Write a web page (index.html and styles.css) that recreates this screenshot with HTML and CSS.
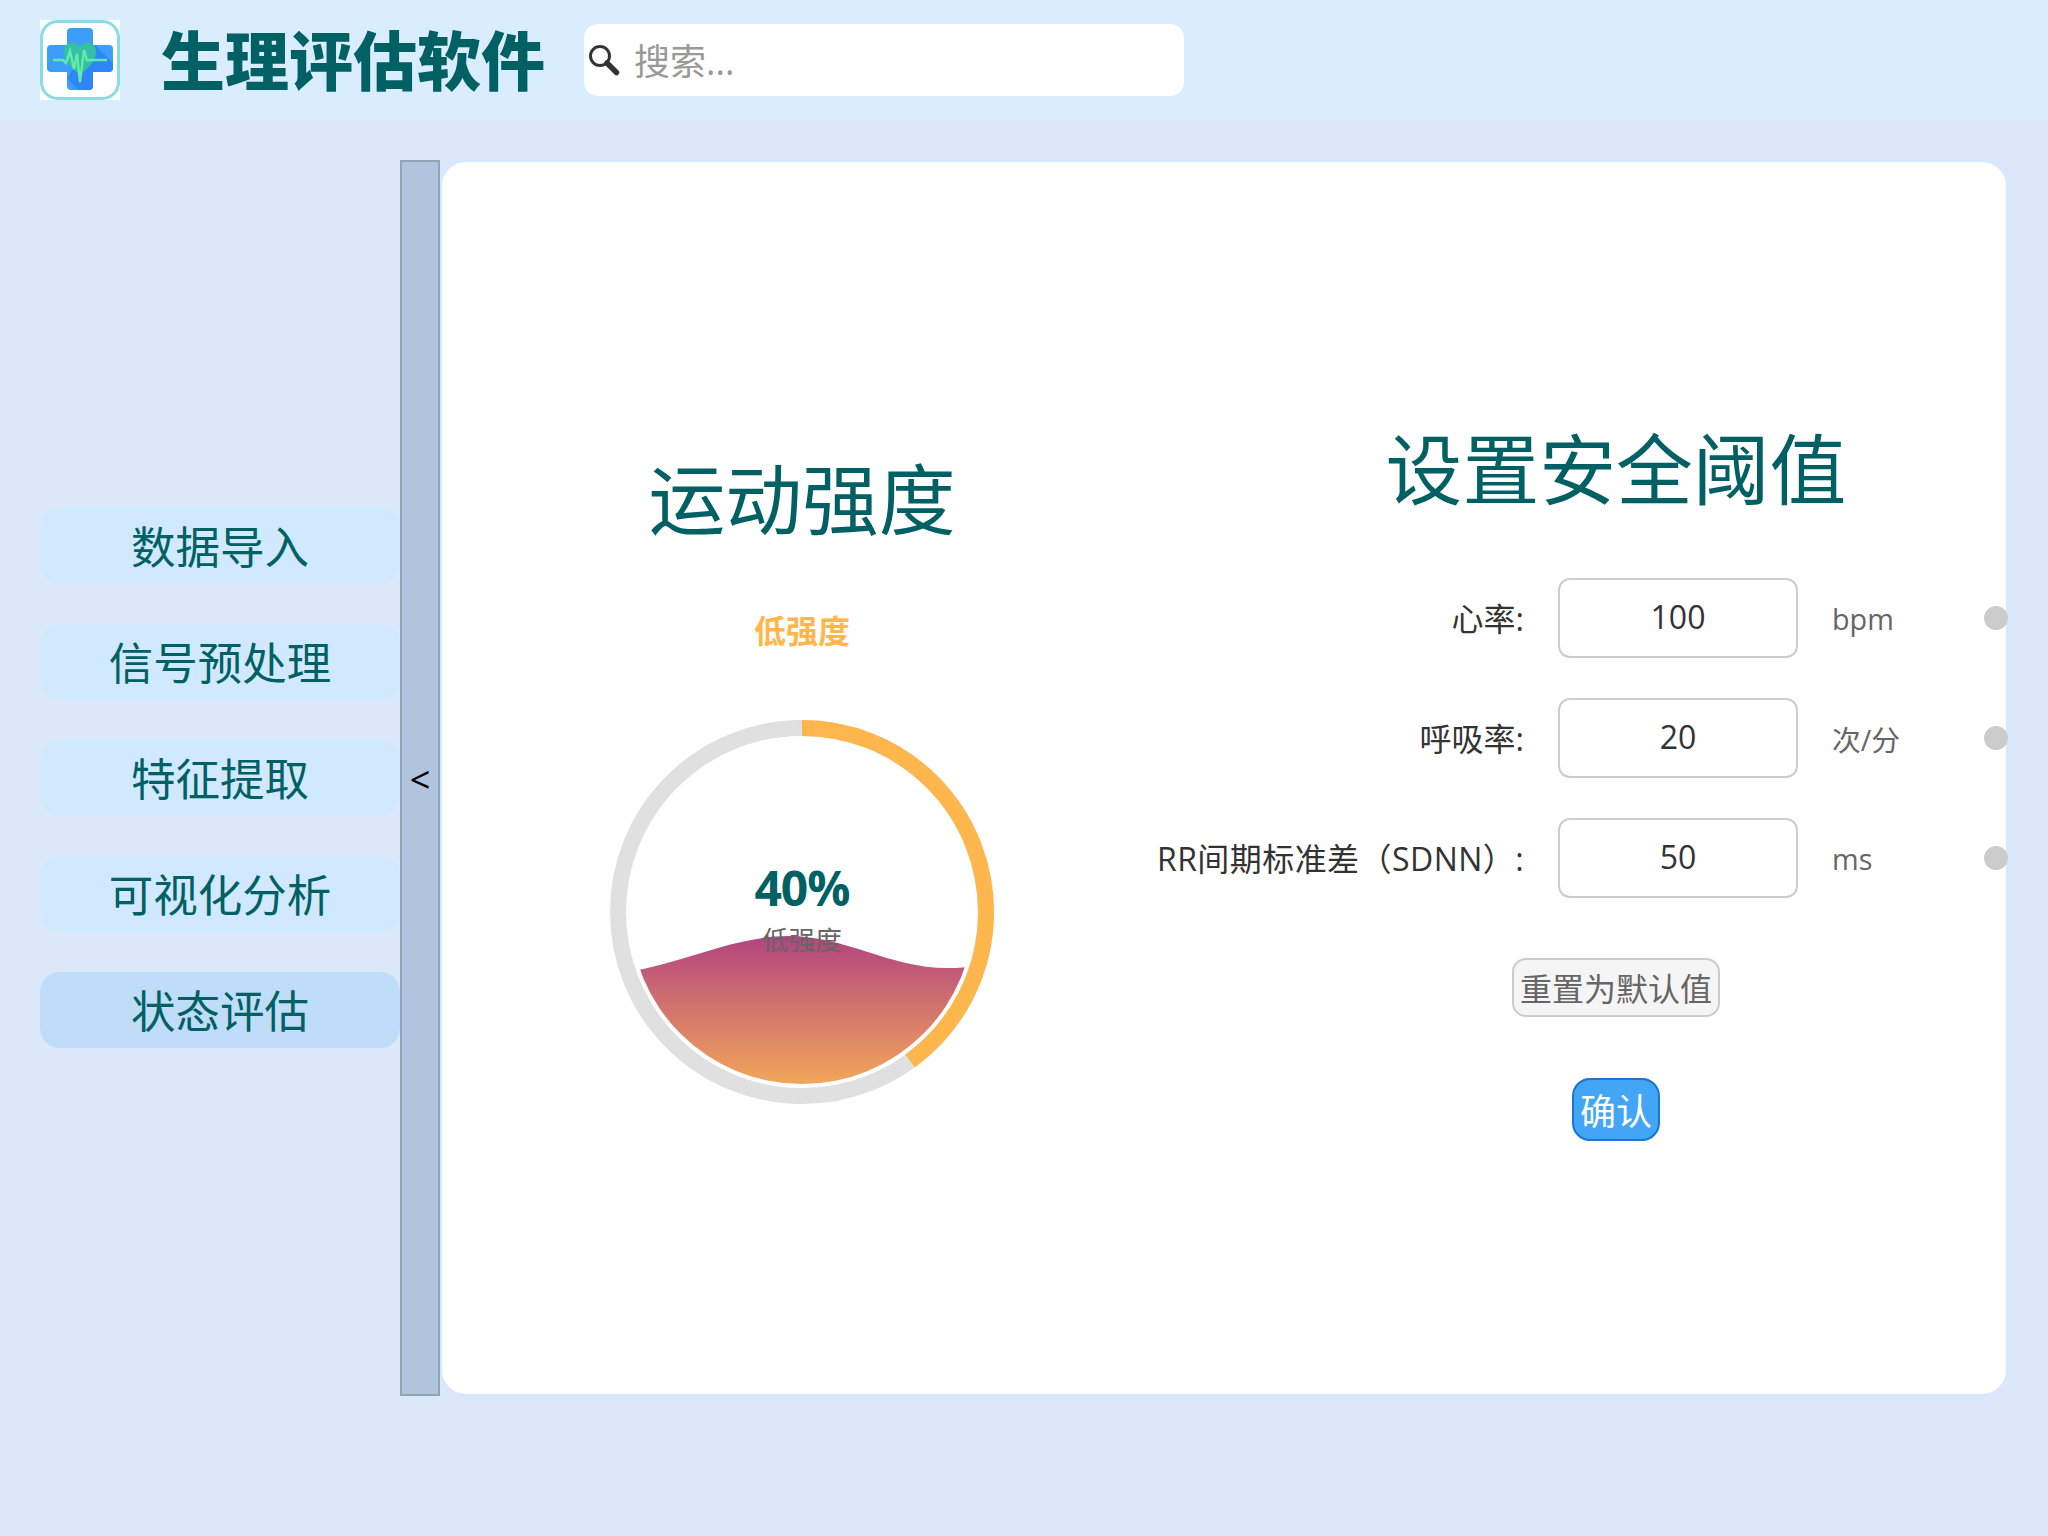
FILE: index.html
```html
<!DOCTYPE html>
<html lang="zh-CN">
<head>
<meta charset="utf-8">
<title>生理评估软件</title>
<link rel="stylesheet" href="styles.css">
</head>
<body>
<header class="topbar">
  <svg class="logo" viewBox="0 0 80 80" aria-label="logo">
    <defs>
      <clipPath id="crossClip"><path d="M31 8h18a4 4 0 0 1 4 4v13h16a4 4 0 0 1 4 4v19a4 4 0 0 1-4 4H53v14a4 4 0 0 1-4 4H31a4 4 0 0 1-4-4V52H11a4 4 0 0 1-4-4V29a4 4 0 0 1 4-4h16V12a4 4 0 0 1 4-4z"/></clipPath>
    </defs>
    <rect width="80" height="80" fill="#fff"/>
    <rect x="1.500" y="1.500" width="77" height="77" rx="16" fill="#fff" stroke="#88dbe9" stroke-width="3"/>
    <g clip-path="url(#crossClip)">
      <rect width="80" height="80" fill="#3d9efa"/>
      <path d="M52 22L80 50V80H48L27 58z" fill="#2f86f6"/>
    </g>
    <path d="M40 55C32 48 24 41 24 32c0-6 4-9.500 8.500-9.500 3 0 6 1.500 7.500 4 1.500-2.500 4.500-4 7.500-4 4.500 0 8.500 3.500 8.500 9.500 0 9-8 16-16 23z" fill="#35c0a5"/>
    <path d="M13 40H23L26 43 30 31 34 49 37 34 40 62 44 30 47 40H67" fill="none" stroke="#62eaa9" stroke-width="2.400"/>
  </svg>
  <h1 class="app-title">生理评估软件</h1>
  <label class="search">
    <svg class="search-icon" viewBox="0 0 32 32" aria-hidden="true">
      <circle cx="12" cy="12" r="9.500" fill="#fff" stroke="#333" stroke-width="3"/>
      <path d="M19 19L28.500 28.500" stroke="#333" stroke-width="5.500" stroke-linecap="round"/>
    </svg>
    <input class="search-input" type="text" placeholder="搜索...">
  </label>
</header>

<div class="workspace">
  <nav class="sidebar">
    <button class="nav-item">数据导入</button>
    <button class="nav-item">信号预处理</button>
    <button class="nav-item">特征提取</button>
    <button class="nav-item">可视化分析</button>
    <button class="nav-item is-active">状态评估</button>
  </nav>
  <button class="collapse">&lt;</button>
  <main class="panel">
    <section class="intensity">
      <h2 class="section-title intensity-title">运动强度</h2>
      <div class="status">低强度</div>
      <div class="gauge">
        <svg class="gauge-svg" viewBox="0 0 384 384" aria-hidden="true">
          <defs>
            <linearGradient id="waveFill" gradientUnits="userSpaceOnUse" x1="0" y1="216" x2="0" y2="364">
              <stop offset="0" stop-color="#b2447f"/>
              <stop offset="1" stop-color="#f2a65a"/>
            </linearGradient>
            <clipPath id="innerClip"><circle cx="192" cy="192" r="172"/></clipPath>
          </defs>
          <circle cx="192" cy="192" r="184" fill="none" stroke="#e0e0e0" stroke-width="16"/>
          <circle class="gauge-arc" cx="192" cy="192" r="184" fill="none" stroke="#ffb74d" stroke-width="16" stroke-dasharray="462.400 1156.100"/>
          <path clip-path="url(#innerClip)" d="M0 254C60 250 118 216 178 216C238 216 280 249 340 248C360 247.500 384 244 384 240V384H0Z" fill="url(#waveFill)"/>
        </svg>
        <div class="gauge-text">
          <div class="gauge-value">40%</div>
          <div class="gauge-label">低强度</div>
        </div>
      </div>
    </section>

    <section class="thresholds">
      <h2 class="section-title shifted">设置安全阈值</h2>
      <div class="rows">
        <label class="row-label">心率:</label>
        <input class="row-input" type="text" value="100">
        <span class="row-unit">bpm</span>
        <span class="row-dot"></span>
        <label class="row-label">呼吸率:</label>
        <input class="row-input" type="text" value="20">
        <span class="row-unit">次/分</span>
        <span class="row-dot"></span>
        <label class="row-label row-label-long">RR间期标准差（SDNN）:</label>
        <input class="row-input" type="text" value="50">
        <span class="row-unit">ms</span>
        <span class="row-dot"></span>
      </div>
      <button class="btn-reset shifted">重置为默认值</button>
      <button class="btn-confirm shifted">确认</button>
    </section>
  </main>
</div>
</body>
</html>
```
FILE: styles.css
```css
* { box-sizing: border-box; }

html, body { height: 100%; }

body {
  margin: 0;
  min-height: 1536px;
  overflow: hidden;
  background: #dae8fa;
  font-family: "Open Sans", "Noto Sans CJK SC", sans-serif;
  color: #333;
}

button, input { font-family: inherit; }

.topbar {
  display: flex;
  align-items: center;
  height: 120px;
  padding-left: 40px;
  background: #d9edff;
}

.logo { width: 80px; height: 80px; flex: none; }

.app-title {
  margin: 2px 39px 0 41px;
  font-size: 64px;
  font-weight: 900;
  line-height: 80px;
  color: #006064;
  white-space: nowrap;
}

.search {
  display: flex;
  align-items: center;
  width: 600px;
  height: 72px;
  padding-left: 4px;
  background: #fff;
  border-radius: 14px;
}

.search-icon { width: 32px; height: 32px; flex: none; }

.search-input {
  flex: 1;
  min-width: 0;
  margin-left: 14px;
  padding: 2px 0 0;
  border: 0;
  outline: 0;
  background: transparent;
  font-size: 36px;
  color: #333;
}

.search-input::placeholder { color: #999; opacity: 1; }

.workspace {
  display: flex;
  height: 1236px;
  margin-top: 40px;
  padding: 0 40px;
}

.sidebar {
  display: flex;
  flex-direction: column;
  justify-content: center;
  gap: 40px;
  width: 360px;
  flex: none;
}

.nav-item {
  height: 76px;
  padding: 2px 0 0;
  border: 0;
  border-radius: 20px;
  background: #d0e9ff;
  color: #006064;
  font-size: 44.500px;
  line-height: 74px;
}

.nav-item.is-active { background: #bfdcf9; }

.collapse {
  width: 40px;
  flex: none;
  padding: 2px 0 0;
  border: 2px solid #8fa5b3;
  background: #b0c4de;
  color: #000;
  font-size: 36px;
}

.panel {
  flex: 1;
  min-width: 0;
  display: flex;
  align-items: center;
  height: 1236px;
  border: 2px solid #d3e9fd;
  border-radius: 26px;
  background: #fff;
}

.section-title {
  margin: 0;
  font-size: 76.800px;
  font-weight: 400;
  line-height: 110px;
  color: #006064;
  white-space: nowrap;
}

.intensity {
  display: flex;
  flex-direction: column;
  align-items: center;
  width: 720px;
  flex: none;
}

.intensity-title { line-height: 96px; }

.status {
  margin-top: 60px;
  font-size: 32px;
  font-weight: 700;
  line-height: 46px;
  color: #ffb74d;
}

.gauge {
  position: relative;
  width: 384px;
  height: 384px;
  margin-top: 66px;
}

.gauge-svg { display: block; width: 384px; height: 384px; }

.gauge-arc {
  transform: rotate(-90deg);
  transform-origin: 192px 192px;
}

.gauge-text {
  position: absolute;
  inset: 0;
  padding-top: 138px;
  text-align: center;
}

.gauge-value {
  font-size: 48px;
  font-weight: 700;
  line-height: 60px;
  letter-spacing: -1px;
  color: #006064;
}

.gauge-label {
  margin-top: 2px;
  font-size: 26.700px;
  line-height: 40px;
  color: #666;
}

.thresholds {
  flex: 1;
  min-width: 0;
  display: flex;
  flex-direction: column;
  align-items: center;
}

.shifted { margin-left: 64px; }

.rows {
  align-self: flex-end;
  display: grid;
  grid-template-columns: auto 240px 118px 24px;
  grid-auto-rows: 80px;
  align-items: center;
  column-gap: 34px;
  row-gap: 40px;
  margin-top: 53px;
  margin-right: -2px;
}

.row-label {
  padding-bottom: 2px;
  font-size: 32px;
  text-align: right;
  white-space: nowrap;
  color: #333;
}

.row-label-long { letter-spacing: 0.440px; }

.row-input {
  width: 240px;
  height: 80px;
  padding: 0 0 3px;
  border: 2px solid #ccc;
  border-radius: 12px;
  outline: 0;
  background: #fff;
  font-size: 32px;
  text-align: center;
  color: #333;
}

.row-unit {
  font-size: 28.800px;
  color: #666;
  white-space: nowrap;
}

.row-dot {
  width: 24px;
  height: 24px;
  border-radius: 50%;
  background: #ccc;
}

.btn-reset {
  height: 59px;
  margin-top: 60px;
  padding: 0 5.500px 2px;
  border: 2px solid #ccc;
  border-radius: 14px;
  background: #f5f5f5;
  color: #666;
  font-size: 32px;
}

.btn-confirm {
  height: 63px;
  margin-top: 61px;
  padding: 0 5.500px;
  border: 2px solid #1976d2;
  border-radius: 18px;
  background: #42a5f5;
  color: #fff;
  font-size: 36px;
}
```
